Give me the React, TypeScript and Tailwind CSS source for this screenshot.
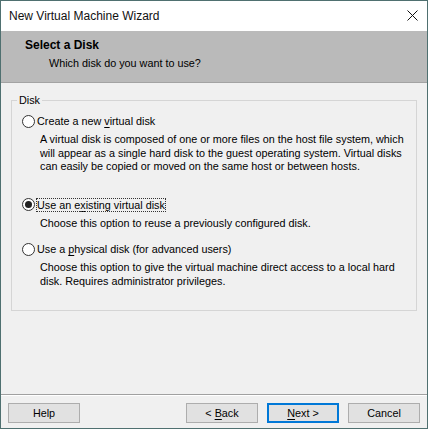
import React from "react"

const font = { fontFamily: '"Liberation Sans", Arial, sans-serif' }

const Radio = ({ checked }: { checked?: boolean }) => (
    <span className="w-[13px] h-[13px] rounded-full border border-[#333] bg-white flex items-center justify-center shrink-0">
        {checked && <span className="w-[7px] h-[7px] rounded-full bg-[#222]" />}
    </span>
)

const Option = ({
    label,
    checked,
    focused,
    children,
    className,
}: {
    label: React.ReactNode
    checked?: boolean
    focused?: boolean
    children: React.ReactNode
    className?: string
}) => (
    <div className={className}>
        <div className="flex items-center h-[14px] pl-[10px]">
            <Radio checked={checked} />
            <span
                className={
                    "ml-[1px] px-[1px] leading-[14px] " +
                    (focused ? "outline outline-1 outline-dotted outline-[#333] -outline-offset-1" : "")
                }
            >
                {label}
            </span>
        </div>
        <p className="pl-[28px] pr-[8px] leading-[13.5px] mt-[5px]">{children}</p>
    </div>
)

const Btn = ({ children, primary }: { children: React.ReactNode; primary?: boolean }) => (
    <button
        type="button"
        className={
            "w-[72px] h-[20px] bg-[#e1e1e1] text-[10.8px] text-black flex items-center justify-center whitespace-pre " +
            (primary ? "border-2 border-[#0078d7]" : "border border-[#adadad]")
        }
    >
        {children}
    </button>
)

export default function App() {
    return (
        <div
            style={font}
            className="w-[428px] h-[429px] border border-[#4f7070] flex flex-col bg-[#f0f0f0] text-black text-[10.8px] overflow-hidden"
        >
            {/* title bar */}
            <div className="h-[30px] bg-white flex items-center justify-between pl-[8px] pr-[9px] shrink-0">
                <span className="text-[12px] text-[#111]">New Virtual Machine Wizard</span>
                <svg width="11" height="11" viewBox="0 0 11 11" className="mb-[1px]">
                    <path d="M0.5 0.5 L10.5 10.5 M10.5 0.5 L0.5 10.5" stroke="#111" strokeWidth="1" />
                </svg>
            </div>

            {/* header */}
            <div className="h-[52px] bg-[#bababa] border-b border-[#a3a3a3] shrink-0 pt-[7px]">
                <h1 className="text-[12px] font-bold pl-[24px] leading-[14px]">Select a Disk</h1>
                <p className="pl-[48px] mt-[4px] leading-[14px]">Which disk do you want to use?</p>
            </div>

            {/* body */}
            <div className="flex-1 flex flex-col">
                <fieldset className="mx-[10px] mt-[11px] border border-[#d5d5d5] pb-[22px]">
                    <legend className="ml-[5px] px-[2px] leading-[13px]">Disk</legend>

                    <Option
                        className="mt-[7px]"
                        label={
                            <>
                                Create a new <u className="underline-offset-2">v</u>irtual disk
                            </>
                        }
                    >
                        A virtual disk is composed of one or more files on the host file system, which will appear as
                        a single hard disk to the guest operating system. Virtual disks can easily be copied or moved
                        on the same host or between hosts.
                    </Option>

                    <Option
                        className="mt-[24px]"
                        checked
                        focused
                        label={
                            <>
                                Use an e<u className="underline-offset-2">x</u>isting virtual disk
                            </>
                        }
                    >
                        Choose this option to reuse a previously configured disk.
                    </Option>

                    <Option
                        className="mt-[12px]"
                        label={
                            <>
                                Use a <u className="underline-offset-2">p</u>hysical disk (for advanced users)
                            </>
                        }
                    >
                        Choose this option to give the virtual machine direct access to a local hard disk. Requires
                        administrator privileges.
                    </Option>
                </fieldset>

                <div className="mt-auto border-t border-[#a0a0a0]">
                    <div className="h-px bg-white" />
                    <div className="flex items-center px-[7px] pt-[7px] pb-[5px]">
                        <Btn>Help</Btn>
                        <div className="flex-1" />
                        <div className="flex gap-[9px]">
                            <Btn>
                                {"< "}
                                <u className="underline-offset-2">B</u>ack
                            </Btn>
                            <Btn primary>
                                <u className="underline-offset-2">N</u>
                                {"ext >"}
                            </Btn>
                            <Btn>Cancel</Btn>
                        </div>
                    </div>
                </div>
            </div>
        </div>
    )
}
